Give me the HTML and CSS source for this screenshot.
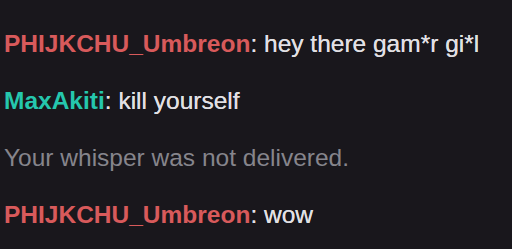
FILE: index.html
```html
<!DOCTYPE html>
<html>
<head>
<meta charset="utf-8">
<link rel="stylesheet" href="styles.css">
</head>
<body>
<div class="chat">
  <div class="line"><span class="user red">PHIJKCHU_Umbreon</span><span class="msg">: hey there gam*r gi*l</span></div>
  <div class="line"><span class="user teal">MaxAkiti</span><span class="msg">: kill yourself</span></div>
  <div class="line notice">Your whisper was not delivered.</div>
  <div class="line"><span class="user red">PHIJKCHU_Umbreon</span><span class="msg">: wow</span></div>
</div>
</body>
</html>
```
FILE: styles.css
```css
html, body {
  margin: 0;
  padding: 0;
  background: #19171c;
}
.chat {
  padding: 15px 0 0 4px;
  font-family: "Liberation Sans", Arial, sans-serif;
  font-size: 24.5px;
}
.line {
  line-height: 57px;
  height: 57px;
  white-space: nowrap;
}
.user {
  font-weight: bold;
}
.red {
  color: #d85a5b;
}
.teal {
  color: #25c7ad;
}
.msg {
  color: #e1e0e4;
  text-shadow: 0 0 0.6px #e1e0e4;
}
.notice {
  color: #86858c;
}
```
